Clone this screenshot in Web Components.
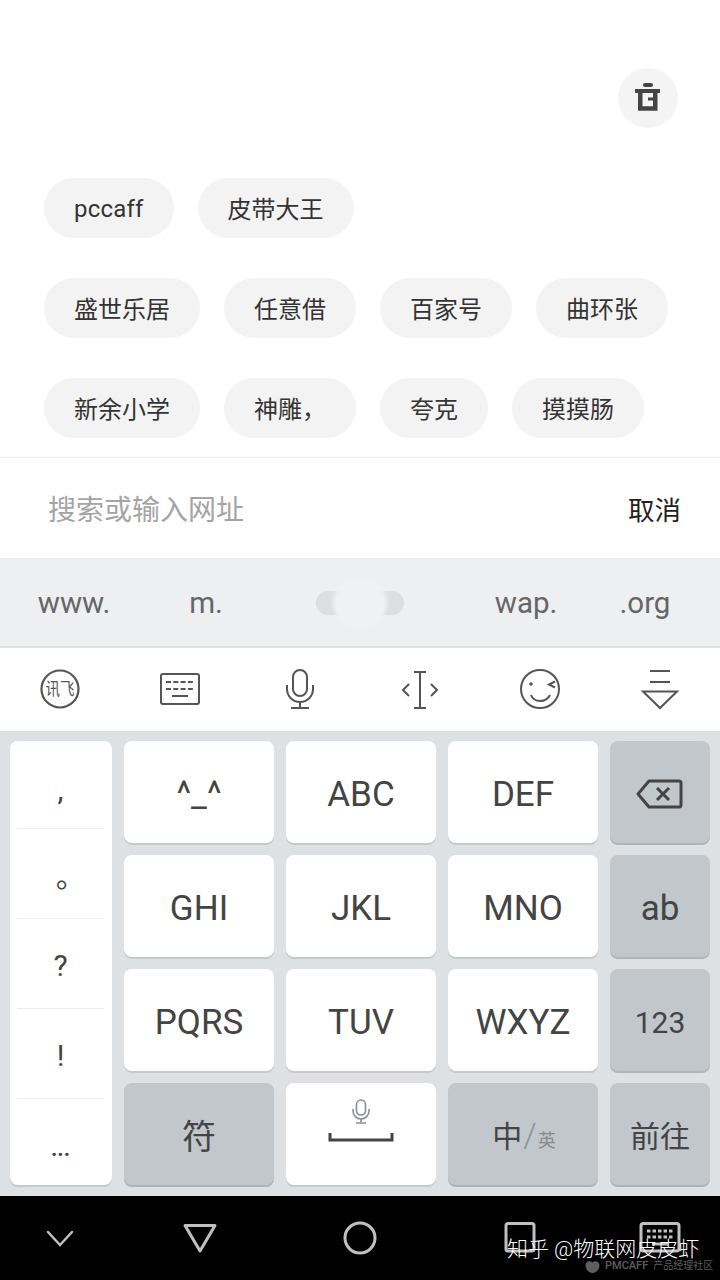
<!DOCTYPE html>
<html lang="zh-CN">
<head>
<meta charset="utf-8">
<title>搜索</title>
<style>
    html, body { margin: 0; padding: 0; background: #fff; }
    body { font-family: Roboto, "Noto Sans CJK SC", sans-serif; }
</style>
</head>
<body>
<search-screen></search-screen>
<script>
"use strict";

const FONT = 'Roboto, "Noto Sans CJK SC", sans-serif';

const ICONS = {
    trash: [50, 50, `<g fill="none" stroke="currentColor">
        <path d="M22 12h6" stroke-width="4" stroke-linecap="round"/>
        <path d="M12 18h25" stroke-width="4"/>
        <path d="M17.250 18v17.500h15V18" stroke-width="4.500"/>
        <path d="M25 26h8" stroke-width="3"/></g>`],
    xunfei: [48, 48, `<circle cx="24" cy="24" r="18.500" fill="none" stroke="currentColor" stroke-width="2.200"/>
        <text x="24" y="30" text-anchor="middle" font-size="17" fill="currentColor" textLength="29" lengthAdjust="spacingAndGlyphs" font-family='"Noto Sans CJK SC", sans-serif'>讯飞</text>`],
    keyboard: [48, 48, `<g fill="none" stroke="currentColor"><rect x="5" y="9" width="38" height="30" rx="2" stroke-width="2"/>
        <path d="M10 17h27M10 24h27" stroke-width="2" stroke-dasharray="5 2.300"/>
        <path d="M16 31h16" stroke-width="2"/></g>`],
    mic: [48, 48, `<g fill="none" stroke="currentColor" stroke-width="2"><rect x="17" y="5" width="14" height="26" rx="7"/>
        <path d="M11 20v4a13 13 0 0 0 26 0v-4M24 37v6M15 43h18"/></g>`],
    cursor: [48, 48, `<g fill="none" stroke="currentColor" stroke-width="2"><path d="M24 7v36M18 7h12M18 43h12"/>
        <path d="M13 19l-6 6 6 6M35 19l6 6-6 6"/></g>`],
    smile: [48, 48, `<g fill="none" stroke="currentColor" stroke-width="2"><circle cx="24" cy="24" r="19"/>
        <path d="M15 30c3 8 15 8 19 0"/><path d="M39 16.500l-6 3 6 3"/></g><circle cx="15" cy="19" r="1.800" fill="currentColor"/>`],
    collapse: [48, 48, `<g fill="none" stroke="currentColor" stroke-width="2"><path d="M14 6h20M14 17h20"/>
        <path d="M7 26.500h34L24 43z"/></g>`],
    backspace: [48, 32, `<g fill="none" stroke="currentColor" stroke-width="3"><path d="M13 3h30a2 2 0 0 1 2 2v22a2 2 0 0 1-2 2H13L2 16z" stroke-linejoin="round"/>
        <path d="M21 10l12 12M33 10L21 22"/></g>`],
    spacemic: [72, 46, `<g fill="none" stroke="#8a8d8f" stroke-width="1.600"><rect x="31.500" y="2" width="9" height="15" rx="4.500"/>
        <path d="M28 11v2a8 8 0 0 0 16 0v-2M36 21v3M31 25h10"/></g>
        <path d="M5 35v7h62v-7" fill="none" stroke="#444" stroke-width="3"/>`],
    chevron: [48, 48, `<path d="M12 18l12 13 12-13" fill="none" stroke="currentColor" stroke-width="2.500" stroke-linecap="round"/>`],
    back: [48, 48, `<path d="M9 11.500h30L24 37z" fill="none" stroke="currentColor" stroke-width="3" stroke-linejoin="round"/>`],
    home: [48, 48, `<circle cx="24" cy="24" r="15" fill="none" stroke="currentColor" stroke-width="3"/>`],
    recent: [48, 48, `<rect x="10" y="9.500" width="28" height="27.500" rx="2" fill="none" stroke="currentColor" stroke-width="3"/>`],
    navkeyboard: [48, 48, `<rect x="5" y="9.500" width="38" height="27.500" rx="2.500" fill="none" stroke="currentColor" stroke-width="3"/>
        <path d="M11 17h26M11 23h26" stroke="currentColor" stroke-width="3" stroke-dasharray="3.500 2"/>
        <path d="M16 30h16" stroke="currentColor" stroke-width="3"/>`],
    pmcaff: [15, 13, `<path d="M7.500 2.500c2.500-2.500 7-1.500 7 3 0 4-3.500 7.500-7 7.500s-7-3.500-7-7.500c0-4.500 4.500-5.500 7-3z" fill="currentColor"/>`]
};

class XIcon extends HTMLElement {
    connectedCallback() {
        const [w, h, body] = ICONS[this.getAttribute("name")];
        this.attachShadow({ mode: "open" }).innerHTML = `
            <style>
                :host { display: inline-flex; line-height: 0; }
            </style>
            <svg width="${w}" height="${h}" viewBox="0 0 ${w} ${h}">${body}</svg>`;
    }
}

class XChip extends HTMLElement {
    constructor() {
        super();
        this.attachShadow({ mode: "open" }).innerHTML = `
            <style>
                :host {
                    display: inline-flex;
                    align-items: center;
                    height: 60px;
                    box-sizing: border-box;
                    padding: 0 30px 2px;
                    border-radius: 30px;
                    background: #f3f3f3;
                    color: #333;
                    font: 24px ${FONT};
                    white-space: nowrap;
                }
                :host([latin]) { padding: 2px 30px 0; letter-spacing: 0.200px; }
            </style>
            <slot></slot>`;
    }
}

class XHistory extends HTMLElement {
    constructor() {
        super();
        const rows = [
            ["皮带大王"],
            ["盛世乐居", "任意借", "百家号", "曲环张"],
            ["新余小学", "神雕，", "夸克", "摸摸肠"]
        ];
        const chips = rows.map(r => r.map(t => `<x-chip>${t}</x-chip>`).join(""));
        chips[0] = `<x-chip latin>pccaff</x-chip>` + chips[0];
        this.attachShadow({ mode: "open" }).innerHTML = `
            <style>
                :host {
                    display: flex;
                    flex-direction: column;
                    gap: 40px;
                    height: 457px;
                    box-sizing: border-box;
                    padding: 68px 42px 0 44px;
                }
                .clear {
                    align-self: flex-end;
                    display: flex;
                    align-items: center;
                    justify-content: center;
                    width: 60px;
                    height: 60px;
                    margin-bottom: 10px;
                    border-radius: 50%;
                    background: #f4f4f4;
                    color: #444;
                }
                .row { display: flex; gap: 24px; }
            </style>
            <div class="clear"><x-icon name="trash"></x-icon></div>
            ${chips.map(c => `<div class="row">${c}</div>`).join("")}`;
    }
}

class XSearchBar extends HTMLElement {
    constructor() {
        super();
        this.attachShadow({ mode: "open" }).innerHTML = `
            <style>
                :host {
                    display: flex;
                    align-items: center;
                    justify-content: space-between;
                    height: 101px;
                    box-sizing: border-box;
                    padding: 0 39px 0 48px;
                    border-top: 1px solid #ececec;
                    font-family: ${FONT};
                }
                .hint { font-size: 28px; color: #a4a4a4; }
                .cancel { font-size: 26.500px; color: #222; }
            </style>
            <span class="hint">搜索或输入网址</span>
            <span class="cancel">取消</span>`;
    }
}

class XSuggestions extends HTMLElement {
    constructor() {
        super();
        this.attachShadow({ mode: "open" }).innerHTML = `
            <style>
                :host {
                    display: grid;
                    grid-template-columns: 148px 116px 192px 140px 98px;
                    align-items: center;
                    justify-items: center;
                    height: 90px;
                    box-sizing: border-box;
                    padding-top: 2px;
                    background: #eeeff0;
                    border-bottom: 2px solid #dfe0e1;
                    color: #666;
                    font: 29.500px ${FONT};
                }
                .pill {
                    position: relative;
                    width: 88px;
                    height: 24px;
                    border-radius: 12px;
                    background: #dcdfdf;
                }
                .pill::after {
                    content: "";
                    position: absolute;
                    left: 17px;
                    top: -14px;
                    width: 54px;
                    height: 52px;
                    border-radius: 50%;
                    background: #eef2f4;
                    filter: blur(2px);
                }
            </style>
            <span>www.</span><span>m.</span><div class="pill"></div><span>wap.</span><span>.org</span>`;
    }
}

class XToolbar extends HTMLElement {
    constructor() {
        super();
        const names = ["xunfei", "keyboard", "mic", "cursor", "smile", "collapse"];
        this.attachShadow({ mode: "open" }).innerHTML = `
            <style>
                :host {
                    display: grid;
                    grid-template-columns: repeat(6, 120px);
                    align-items: center;
                    justify-items: center;
                    height: 83px;
                    box-sizing: border-box;
                    padding-bottom: 2px;
                    background: #fff;
                    color: #555;
                }
            </style>
            ${names.map(n => `<x-icon name="${n}"></x-icon>`).join("")}`;
    }
}

class XKey extends HTMLElement {
    constructor() {
        super();
        this.attachShadow({ mode: "open" }).innerHTML = `
            <style>
                :host {
                    display: flex;
                    align-items: center;
                    justify-content: center;
                    box-sizing: border-box;
                    border-radius: 8px;
                    background: #fff;
                    box-shadow: 0 2px 0 #c5cacc;
                    color: #444;
                    font: 35px ${FONT};
                }
                :host([latin]) { padding-top: 4px; }
                :host([dark]) { background: #c1c7ca; box-shadow: 0 2px 0 #aeb4b7; }
            </style>
            <slot></slot>`;
    }
}

class XPunctuation extends HTMLElement {
    constructor() {
        super();
        this.attachShadow({ mode: "open" }).innerHTML = `
            <style>
                :host {
                    grid-row: span 4;
                    display: grid;
                    grid-template-rows: 88px 90px 90px 90px 86px;
                    border-radius: 8px;
                    background: #fff;
                    box-shadow: 0 2px 0 #c5cacc;
                    color: #444;
                    font: 30px ${FONT};
                }
                div {
                    display: flex;
                    align-items: center;
                    justify-content: center;
                    box-sizing: border-box;
                    margin: 0 8px 0 7px;
                    padding-top: 4px;
                    border-bottom: 1px solid #eceeee;
                }
                div:last-child { border-bottom: 0; }
                .comma { padding-top: 10px; }
                .dot { font: 30px "Noto Sans CJK TC", sans-serif; padding: 18px 0 0 2px; }
                .more { font-size: 22px; font-weight: 700; padding-top: 12px; }
            </style>
            <div class="comma">,</div>
            <div class="dot">。</div>
            <div>?</div>
            <div>!</div>
            <div class="more">...</div>`;
    }
}

class XKeyboard extends HTMLElement {
    constructor() {
        super();
        this.attachShadow({ mode: "open" }).innerHTML = `
            <style>
                :host {
                    display: grid;
                    grid-template-columns: 102px repeat(3, 150px) 100px;
                    grid-auto-rows: 102px;
                    gap: 12px;
                    height: 465px;
                    box-sizing: border-box;
                    padding: 10px 10px 11px;
                    background: #dde1e3;
                }
                .dual { font-size: 30px; padding-left: 2px; }
                .dual small { font-size: 18px; color: #85898b; margin-left: 1px; }
                .dual i { font: 300 34px ${FONT}; color: #8f9496; margin-left: 1px; }
                .go { font-size: 30px; }
                .num { font-size: 30px; }
                .sym { font-size: 34px; }
            </style>
            <x-punctuation></x-punctuation>
            <x-key latin>^_^</x-key><x-key latin>ABC</x-key><x-key latin>DEF</x-key>
            <x-key dark latin><x-icon name="backspace"></x-icon></x-key>
            <x-key latin>GHI</x-key><x-key latin>JKL</x-key><x-key latin>MNO</x-key><x-key dark latin>ab</x-key>
            <x-key latin>PQRS</x-key><x-key latin>TUV</x-key><x-key latin>WXYZ</x-key><x-key dark latin><span class="num">123</span></x-key>
            <x-key dark><span class="sym">符</span></x-key>
            <x-key style="align-items:flex-start;padding-top:15px"><x-icon name="spacemic"></x-icon></x-key>
            <x-key dark><span class="dual">中<i>/</i><small>英</small></span></x-key>
            <x-key dark><span class="go">前往</span></x-key>`;
    }
}

class XNavBar extends HTMLElement {
    constructor() {
        super();
        const names = ["chevron", "back", "home", "recent", "navkeyboard"];
        this.attachShadow({ mode: "open" }).innerHTML = `
            <style>
                :host {
                    position: relative;
                    display: grid;
                    grid-template-columns: 120px 160px 160px 160px 120px;
                    align-items: center;
                    justify-items: center;
                    height: 84px;
                    background: #000;
                    color: #c0c0c0;
                }
                .mark {
                    position: absolute;
                    left: 507px;
                    top: 39px;
                    color: #fff;
                    font: 300 21px/28px ${FONT};
                    white-space: nowrap;
                }
                .brand {
                    position: absolute;
                    left: 585px;
                    top: 62px;
                    display: flex;
                    align-items: center;
                    gap: 5px;
                    color: #5e5e5e;
                    font: 500 11px/16px ${FONT};
                    white-space: nowrap;
                }
                .brand small { font-size: 10px; font-weight: 400; }
            </style>
            ${names.map(n => `<x-icon name="${n}"></x-icon>`).join("")}
            <div class="mark">知乎 @物联网皮皮虾</div>
            <div class="brand"><x-icon name="pmcaff"></x-icon>PMCAFF<small>产品经理社区</small></div>`;
    }
}

class SearchScreen extends HTMLElement {
    constructor() {
        super();
        this.attachShadow({ mode: "open" }).innerHTML = `
            <style>
                :host { display: flex; flex-direction: column; width: 720px; height: 1280px; overflow: hidden; }
            </style>
            <x-history></x-history>
            <x-search-bar></x-search-bar>
            <x-suggestions></x-suggestions>
            <x-toolbar></x-toolbar>
            <x-keyboard></x-keyboard>
            <x-nav-bar></x-nav-bar>`;
    }
}

customElements.define("x-icon", XIcon);
customElements.define("x-chip", XChip);
customElements.define("x-history", XHistory);
customElements.define("x-search-bar", XSearchBar);
customElements.define("x-suggestions", XSuggestions);
customElements.define("x-toolbar", XToolbar);
customElements.define("x-key", XKey);
customElements.define("x-punctuation", XPunctuation);
customElements.define("x-keyboard", XKeyboard);
customElements.define("x-nav-bar", XNavBar);
customElements.define("search-screen", SearchScreen);
</script>
</body>
</html>
